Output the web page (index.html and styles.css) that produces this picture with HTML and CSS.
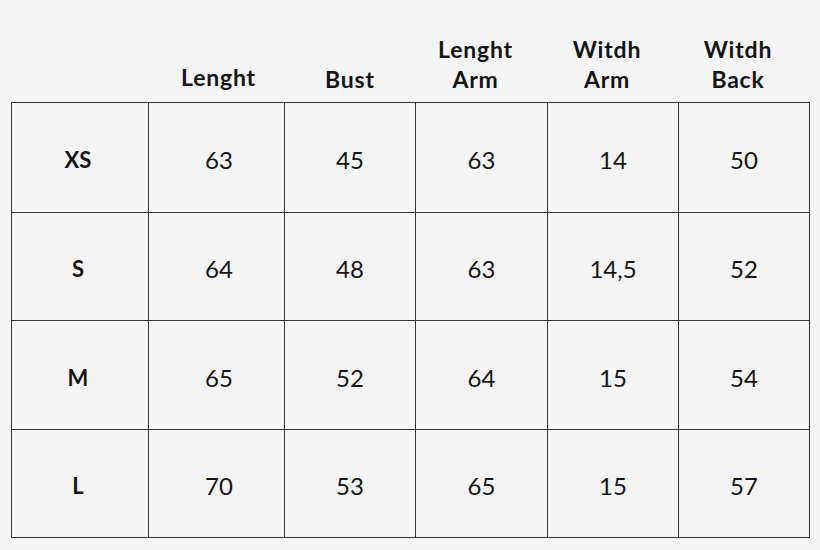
FILE: index.html
```html
<!DOCTYPE html>
<html>
<head>
<meta charset="utf-8">
<link rel="stylesheet" href="styles.css">
</head>
<body>
<table class="size-table">
  <colgroup>
    <col class="c0"><col class="c1"><col class="c2"><col class="c3"><col class="c4"><col class="c5">
  </colgroup>
  <thead>
    <tr>
      <th class="blank"></th>
      <th class="h1">Lenght</th>
      <th class="h2">Bust</th>
      <th class="h3">Lenght<br>Arm</th>
      <th class="h4">Witdh<br>Arm</th>
      <th class="h5">Witdh<br>Back</th>
    </tr>
  </thead>
  <tbody>
    <tr class="r1"><td class="label">XS</td><td class="first">63</td><td>45</td><td>63</td><td>14</td><td>50</td></tr>
    <tr class="r2"><td class="label">S</td><td class="first">64</td><td>48</td><td>63</td><td>14,5</td><td>52</td></tr>
    <tr class="r3"><td class="label">M</td><td class="first">65</td><td>52</td><td>64</td><td>15</td><td>54</td></tr>
    <tr class="r4"><td class="label">L</td><td class="first">70</td><td>53</td><td>65</td><td>15</td><td>57</td></tr>
  </tbody>
</table>
</body>
</html>
```

FILE: styles.css
```css
html, body {
  margin: 0;
  padding: 0;
  background: #f4f4f4;
}
body {
  width: 820px;
  height: 550px;
  overflow: hidden;
  font-family: Lato, "Liberation Sans", sans-serif;
  color: #111;
}
.size-table {
  margin-left: 11px;
  border-collapse: collapse;
  table-layout: fixed;
  width: 798px;
}
.c0 { width: 137px; }
.c1 { width: 136px; }
.c2 { width: 131px; }
.c3 { width: 132px; }
.c4 { width: 131px; }
.c5 { width: 131px; }

thead th {
  height: 102px;
  padding: 0 0 8px 0;
  box-sizing: border-box;
  vertical-align: bottom;
  font-weight: 700;
  font-size: 23px;
  line-height: 30px;
  letter-spacing: 0.8px;
  text-align: center;
  color: #151515;
}
thead th.h1 { padding-bottom: 10px; padding-left: 4px; }
thead th.h2 { padding-bottom: 8px; }
thead th.h3, thead th.h4, thead th.h5 { padding-right: 12px; }

tbody td {
  box-sizing: border-box;
  border: 1px solid #333;
  text-align: center;
  vertical-align: middle;
  font-size: 24px;
  font-weight: 400;
  padding: 5px 0 0 0;
  color: #151515;
}
tbody td.first { padding-left: 5px; }
tbody td.label {
  font-weight: 700;
  font-size: 22px;
  padding-right: 4px;
}
.r1 td { height: 110px; }
.r2 td { height: 108px; }
.r3 td { height: 109px; }
.r4 td { height: 108px; }
```
